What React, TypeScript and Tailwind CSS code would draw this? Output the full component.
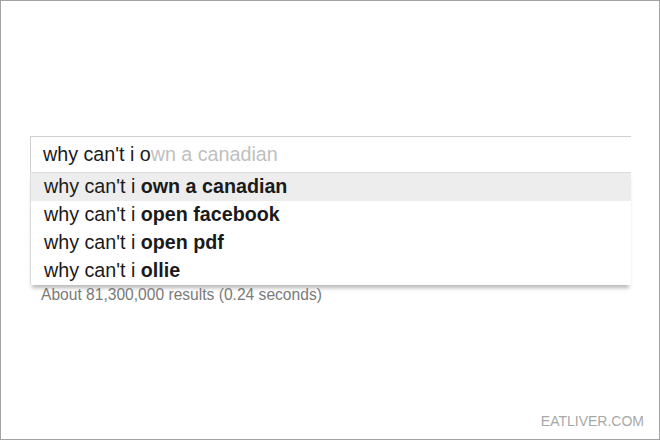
export default function App() {
  const items = [
    { rest: "own a canadian", active: true },
    { rest: "open facebook", active: false },
    { rest: "open pdf", active: false },
    { rest: "ollie", active: false },
  ];

  return (
    <div
      className="w-[660px] h-[440px] bg-white border border-[#a3a3a3] flex flex-col"
      style={{ fontFamily: '"Liberation Sans", Arial, sans-serif' }}
    >
      <div className="pt-[135px] pl-[29px]">
        {/* search box */}
        <div className="w-[601px] border-t border-l border-[#cfcfcf] bg-white h-[36px] flex items-center pl-[12px] text-[19.7px] leading-none">
          <span className="text-[#1a1a1a]">why can't i o</span>
          <span className="text-[#c0c0c0]">wn a canadian</span>
        </div>
        {/* suggestions */}
        <div className="w-[601px] border-t border-l border-[#dcdcdc] bg-white shadow-[0_5px_4px_-2px_rgba(0,0,0,0.28)]">
          {items.map((it) => (
            <div
              key={it.rest}
              className={`h-[28px] flex items-center pl-[13px] text-[19.7px] leading-none text-[#1a1a1a] whitespace-pre ${
                it.active ? "bg-[#ededed]" : ""
              }`}
            >
              <span>why can't i </span>
              <span className="font-bold">{it.rest}</span>
            </div>
          ))}
        </div>
        <div className="pl-[11px] pt-[1px] text-[15.6px] leading-[18px] text-[#7a7a7a]">
          About 81,300,000 results (0.24 seconds)
        </div>
      </div>
      <div className="mt-auto flex justify-end pr-[15px] pb-[11px] text-[14px] leading-none text-[#a8a8a8]">
        EATLIVER.COM
      </div>
    </div>
  );
}
